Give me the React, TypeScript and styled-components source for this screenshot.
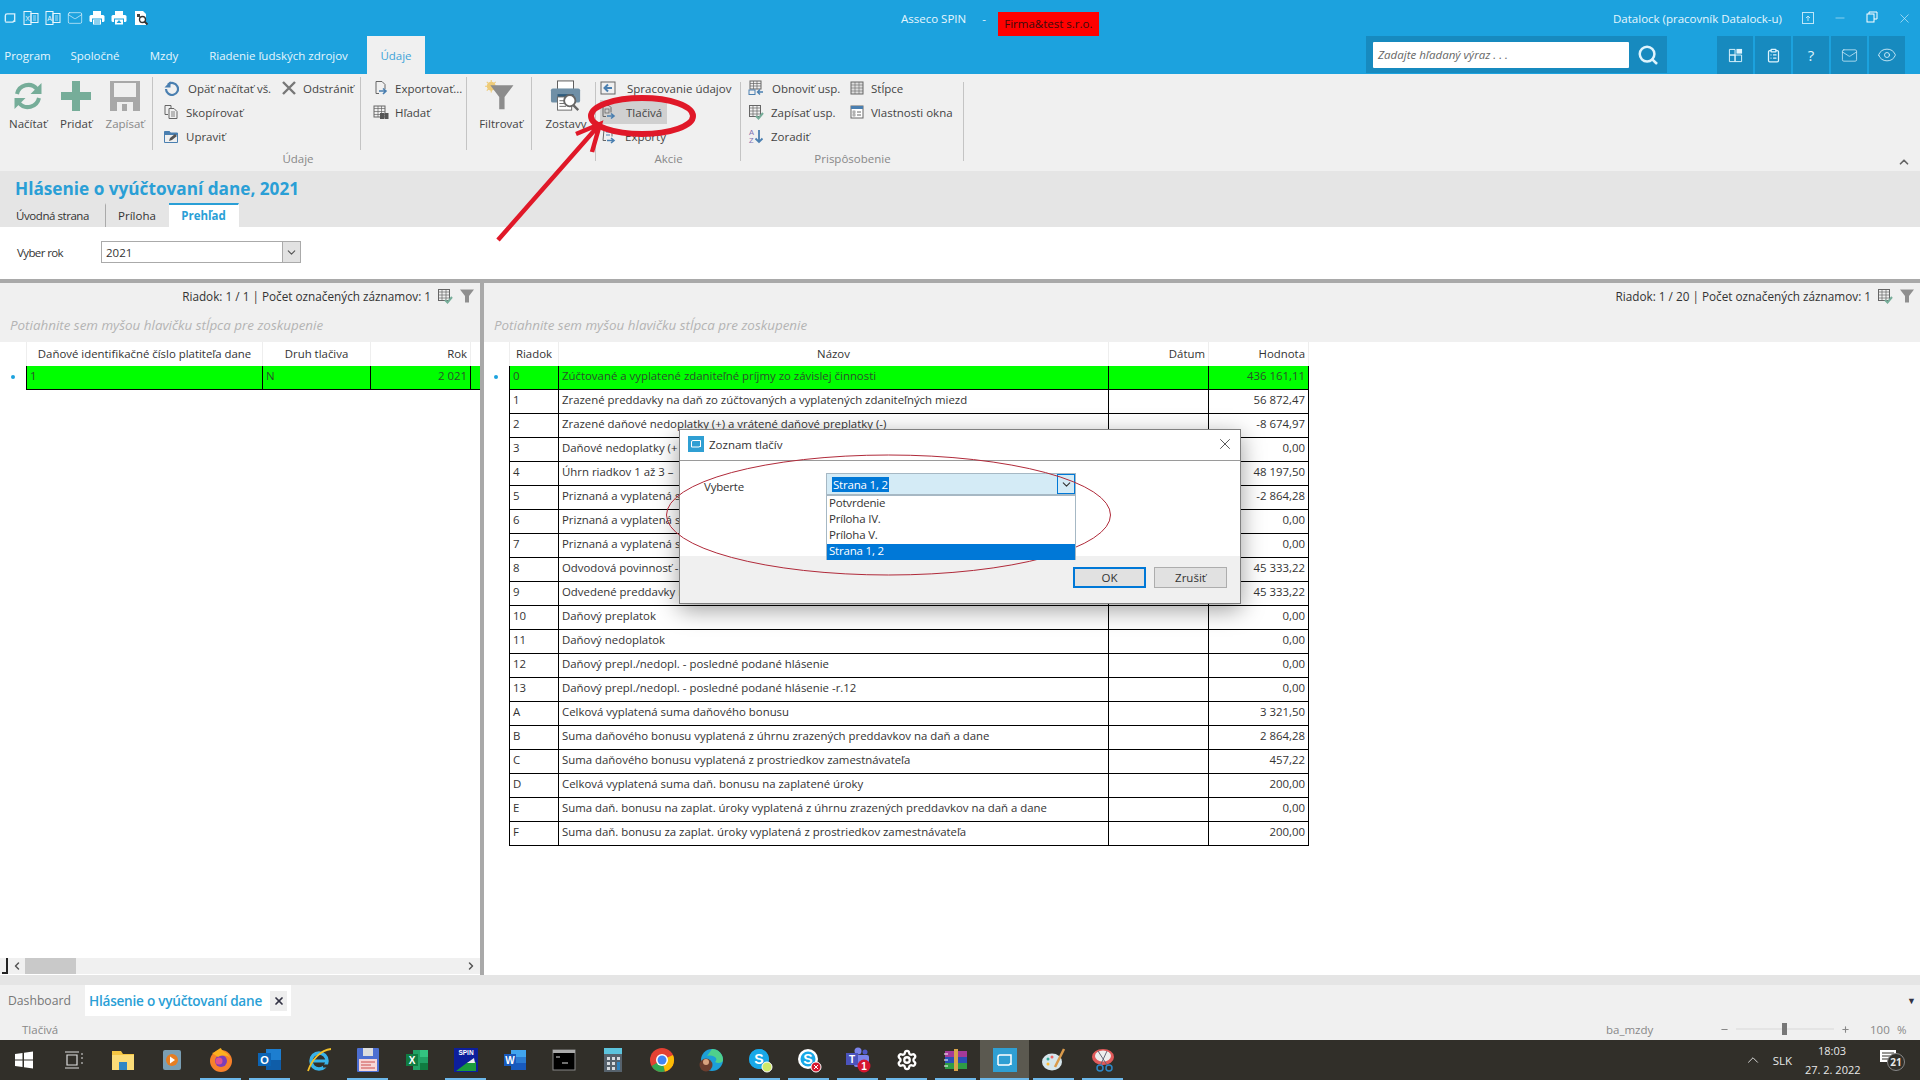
import React from "react";
import styled, { createGlobalStyle } from "styled-components";
import { Search, Mail, Eye, ClipboardList, Settings, ChevronUp, ChevronDown, ChevronLeft, ChevronRight, X, Minus, Plus } from "lucide-react";

const Global = createGlobalStyle`
  html, body { margin: 0; padding: 0; background: #fff; }
  body { font-family: "Open Sans", "Liberation Sans", sans-serif; font-size: 11.5px; color: #333; }
  * { box-sizing: border-box; }
`;

const Page = styled.div`
  position: relative; width: 1920px; height: 1080px; overflow: hidden;
  display: flex; flex-direction: column; background: #fff;
`;

/* ---------- Title bar ---------- */
const Blue = styled.header`background: #1ca2de; height: 74px; display: flex; flex-direction: column; color: #e6f6fd;`;
const TitleRow = styled.div`height: 36px; display: flex; align-items: center;`;
const QuickIcons = styled.div`width: 901px; display: flex; align-items: center; gap: 6px; padding-left: 3px;`;
const TitleText = styled.span`font-size: 11.5px;`;
const Dash = styled.span`margin: 0 12px 0 16px;`;
const Firm = styled.span`align-self: flex-end; background: #f00; color: #3a0d0d; width: 101px; height: 24px; line-height: 24px; text-align: center; font-size: 11.5px; white-space: nowrap;`;
const User = styled.span`margin-left: auto; margin-right: 10px; font-size: 11.5px;`;
const WinBtn = styled.span`width: 32px; display: flex; justify-content: center; color: #d8f0fb;`;
const WinBtns = styled.div`display: flex; width: 128px;`;
const MenuRow = styled.div`height: 38px; display: flex; align-items: stretch;`;
const Menu = styled.span<{ $w: number; $pr?: number; $active?: boolean }>`
  width: ${p => p.$w}px; padding-right: ${p => p.$pr ?? 0}px; display: flex; align-items: center; justify-content: center; font-size: 11.5px; white-space: nowrap;
  color: ${p => (p.$active ? "#3ea4d9" : "#e6f6fd")};
  background: ${p => (p.$active ? "#f0f0f0" : "transparent")};
`;
const SearchBlock = styled.div`margin-left: auto; width: 301px; height: 37px; background: #178abf; display: flex; align-items: center; padding-left: 7px;`;
const SearchInput = styled.div`width: 256px; height: 26px; background: #fff; border-radius: 1px; color: #666; font-style: italic; font-size: 11.5px; line-height: 26px; padding-left: 5px;`;
const SearchIcon = styled.span`display: flex; margin-left: 8px; color: #dff4fd;`;
const QuickBtns = styled.div`display: flex; gap: 2px; margin: 0 15px 0 50px;`;
const QuickBtn = styled.span`width: 36px; height: 38px; background: #178abf; display: flex; align-items: center; justify-content: center; color: #dff4fd; font-size: 15px;`;

/* ---------- Ribbon ---------- */
const Ribbon = styled.section`height: 97px; background: #f0f0f0; display: flex; align-items: flex-start; padding-top: 3px;`;
const Group = styled.div<{ $w: number }>`width: ${p => p.$w}px; display: flex; flex-direction: column; position: relative;`;
const GroupEdge = styled.span`position: absolute; right: 0; top: 5px; height: 79px; width: 1px; background: #c4c4c4;`;
const GroupBody = styled.div`height: 73px; display: flex;`;
const GroupLabel = styled.div`height: 20px; line-height: 18px; text-align: center; color: #888; font-size: 11.5px;`;
const Big = styled.div<{ $w: number; $dim?: boolean; $pl?: number }>`
  width: ${p => p.$w}px; padding-left: ${p => p.$pl ?? 0}px; display: flex; flex-direction: column; align-items: center; padding-top: 3px;
  color: ${p => (p.$dim ? "#888" : "#444")}; font-size: 11.5px; white-space: nowrap;
  svg { height: 32px; margin-bottom: 4px; }
`;
const Sep = styled.span`width: 1px; background: #c4c4c4; flex: none;`;
const Col = styled.div<{ $w: number; $pl?: number }>`width: ${p => p.$w}px; padding-left: ${p => p.$pl ?? 0}px; margin-top: -1px; display: flex; flex-direction: column; flex: none;`;
const Small = styled.div<{ $hover?: boolean; $gap?: number }>`
  height: 24px; display: flex; align-items: center; gap: ${p => p.$gap ?? 6}px; color: #444; font-size: 11.5px; white-space: nowrap;
  background: ${p => (p.$hover ? "#d0d0d0" : "transparent")};
  svg { flex: none; }
`;
const Collapse = styled.span`align-self: flex-end; margin: 0 9px 2px auto; color: #666; display: flex;`;

/* ---------- Doc header ---------- */
const DocHead = styled.section`height: 56px; background: #e5e5e5; display: flex; flex-direction: column;`;
const DocTitle = styled.h1`margin: 0; height: 32px; padding-left: 15px; line-height: 36px; font-size: 17.2px; font-weight: 700; color: #2a9fd6;`;
const SubTabs = styled.nav`height: 24px; display: flex;`;
const SubTab = styled.span<{ $w: number; $active?: boolean; $div?: boolean; $tight?: boolean }>`
  width: ${p => p.$w}px; display: flex; align-items: center; justify-content: center; font-size: 11.5px; padding-bottom: 2px;
  letter-spacing: ${p => (p.$tight ? "-0.45px" : "0")};
  background: ${p => (p.$active ? "#fff" : "transparent")};
  color: ${p => (p.$active ? "#2a9fd6" : "#333")};
  font-weight: ${p => (p.$active ? 700 : 400)};
  border-top: 2px solid ${p => (p.$active ? "#2a9fd6" : "transparent")};
  border-right: 1px solid ${p => (p.$div ? "#aaa" : "transparent")};
`;
const YearRow = styled.section`height: 52px; display: flex; align-items: center; padding: 0 0 2px 17px;`;
const YearLabel = styled.span`width: 84px; font-size: 11.5px; letter-spacing: -0.6px;`;
const Select = styled.div`width: 200px; height: 22px; border: 1px solid #aaa; background: #fff; display: flex; align-items: center; padding-left: 4px; justify-content: space-between; font-size: 11.5px;`;
const SelectBtn = styled.span`width: 18px; height: 20px; background: #e2e2e2; border-left: 1px solid #aaa; display: flex; align-items: center; justify-content: center; color: #555;`;
const HSplit = styled.div`height: 4px; background: #a9a9a9;`;

/* ---------- Panels ---------- */
const Panels = styled.main`height: 692px; display: flex;`;
const Panel = styled.div<{ $w?: number }>`
  ${p => (p.$w ? `width: ${p.$w}px;` : "flex: 1;")}
  display: flex; flex-direction: column; position: relative; overflow: hidden;
`;
const VSplit = styled.div`width: 4px; background: #a9a9a9; flex: none;`;
const Info = styled.div`height: 26px; background: #f0f0f0; display: flex; align-items: center; justify-content: flex-end; gap: 6px; padding-right: 5px; font-size: 11.75px; color: #333; svg { flex: none; }`;
const Hint = styled.div`height: 33px; background: #f0f0f0; color: #b4b4b4; font-style: italic; font-size: 13.4px; line-height: 32px; padding-left: 10px;`;
const Grid = styled.div<{ $left: number }>`flex: 1; padding-left: ${p => p.$left}px; position: relative;`;
const Row = styled.div<{ $cols: string; $head?: boolean; $on?: boolean }>`
  display: grid; grid-template-columns: ${p => p.$cols}; height: 24px; width: max-content;
  background: ${p => (p.$on ? "#00ff00" : "#fff")};
  ${p => (p.$head ? "" : "border-bottom: 1px solid #000;")}
`;
const Cell = styled.div<{ $align?: string; $head?: boolean; $on?: boolean }>`
  padding: 0 3px; line-height: ${p => (p.$head ? 24 : 20)}px; font-size: 11.4px; white-space: nowrap; overflow: hidden;
  text-align: ${p => p.$align ?? "left"};
  color: ${p => (p.$on ? "#2b4f2b" : "#333")};
  border-left: 1px solid ${p => (p.$head ? "#eee" : "#000")};
  &:last-child { border-right: 1px solid ${p => (p.$head ? "#eee" : "#000")}; }
`;
const Dot = styled.span<{ $x: number }>`position: absolute; left: ${p => p.$x}px; top: 33px; width: 4px; height: 4px; border-radius: 50%; background: #1ca2de;`;
const Scroll = styled.div`height: 16px; margin-bottom: 1px; background: #f0f0f0; display: flex; align-items: center; color: #555; position: relative;`;
const ScrollCorner = styled.span`position: absolute; left: 2px; top: 0; bottom: 0; width: 6px; border-right: 2px solid #222; border-bottom: 2px solid #222;`;
const Thumb = styled.span`width: 51px; height: 16px; background: #c9c9c9; margin: 0 auto 0 2px;`;
const ScrollArrow = styled.span`display: flex; margin-left: 11px;`;
const ScrollEnd = styled.span`display: flex; margin-right: 3px;`;

/* ---------- Bottom ---------- */
const Gap = styled.div`height: 10px; background: #e5e5e5;`;
const DocTabs = styled.div`height: 31px; background: #f0f0f0; display: flex; align-items: stretch; font-size: 12.2px;`;
const DocTab = styled.span`width: 85px; padding-left: 8px; display: flex; align-items: center; color: #777;`;
const DocTabOn = styled.span`width: 206px; background: #fff; color: #2a9fd6; font-weight: 600; display: flex; align-items: center; justify-content: space-between; padding: 0 4px; font-size: 13.6px; white-space: nowrap; letter-spacing: -0.25px;`;
const TabClose = styled.span`width: 17px; height: 20px; background: #eee; color: #334; display: flex; align-items: center; justify-content: center;`;
const TabsMenu = styled.span`margin-left: auto; margin-right: 4px; display: flex; align-items: center; color: #334; font-size: 9px;`;
const StatusLine = styled.div`height: 24px; padding-top: 2px; background: #f0f0f0; display: flex; align-items: center; color: #888; font-size: 11.5px;`;
const StatusLeft = styled.span`padding-left: 22px; width: 1606px;`;
const StatusDb = styled.span`width: 114px;`;
const Zoom = styled.div`display: flex; align-items: center; color: #888;`;
const Track = styled.span`width: 98px; height: 2px; margin: 0 7px; background: #e4e4e4; position: relative;`;
const TrackThumb = styled.span`position: absolute; left: 46px; top: -5px; width: 5px; height: 12px; background: #777;`;
const ZoomVal = styled.span`margin-left: 20px; width: 27px;`;

/* ---------- Taskbar ---------- */
const Taskbar = styled.footer`height: 40px; background: #312f29; display: flex; align-items: center; color: #e8e8e8; font-size: 11.5px;`;
const TaskBtn = styled.span<{ $w?: number; $run?: boolean; $on?: boolean }>`
  width: ${p => p.$w ?? 49}px; height: 40px; position: relative; display: flex; align-items: center; justify-content: center; flex: none;
  background: ${p => (p.$on ? "#5b5950" : "transparent")};
  ${p => (p.$run ? `&::after { content: ""; position: absolute; left: ${p.$on ? 0 : 4}px; right: ${p.$on ? 0 : 4}px; bottom: 0; height: 2px; background: #6cb8ea; }` : "")}
`;
const Tray = styled.div`margin-left: auto; display: flex; align-items: center; height: 40px;`;
const Lang = styled.span`margin: 0 13px 0 11px;`;
const Clock = styled.div`width: 54px; text-align: center; line-height: 19px; white-space: nowrap; font-size: 11px;`;
const Notif = styled.span`position: relative; margin: 0 20px 0 21px; width: 20px; height: 20px; display: flex;`;
const NotifCount = styled.span`position: absolute; left: 7px; top: 3px; width: 18px; height: 18px; border: 1px solid #888; border-radius: 50%; background: #312f29; font-size: 10px; font-weight: 700; line-height: 16px; text-align: center;`;

/* ---------- Dialog ---------- */
const Dialog = styled.div`
  position: absolute; left: 679px; top: 429px; width: 562px; height: 175px; background: #fff; border: 1px solid #808080;
  box-shadow: 0 6px 22px rgba(0,0,0,.38); display: flex; flex-direction: column;
`;
const DlgHead = styled.div`height: 31px; border-bottom: 1px solid #9a9a9a; display: flex; align-items: center; padding: 0 6px 2px 8px; gap: 5px; font-size: 11.5px;`;
const DlgClose = styled.span`margin-left: auto; display: flex; color: #222;`;
const DlgBody = styled.div`height: 95px; position: relative; display: flex; padding: 18px 0 0 24px; font-size: 11.5px; letter-spacing: -0.2px;`;
const DlgFoot = styled.div`flex: 1; background: #f0f0f0; display: flex; justify-content: flex-end; align-items: flex-start; padding: 11px 13px 0 0; gap: 8px;`;
const DlgBtn = styled.span<{ $primary?: boolean }>`
  width: 73px; height: 21px; background: #e1e1e1; font-size: 11.5px; display: flex; align-items: center; justify-content: center;
  border: ${p => (p.$primary ? "2px solid #0078d7" : "1px solid #adadad")};
`;
const Combo = styled.div`position: absolute; left: 146px; top: 12px; width: 250px; height: 22px; background: #d4ebf6; border: 1px solid #a6b8c4; display: flex; align-items: center; padding-left: 5px;`;
const Selected = styled.span`background: #0078d7; color: #fff; padding: 0 1px; line-height: 15px;`;
const ComboBtn = styled.span`margin-left: auto; width: 18px; height: 20px; border: 1px solid #0078d7; background: #d4ebf6; display: flex; align-items: center; justify-content: center; color: #333;`;
const List = styled.div`position: absolute; left: 146px; top: 34px; width: 250px; height: 65px; background: #fff; border: 1px solid #a6b8c4; z-index: 2;`;
const ListItem = styled.div<{ $on?: boolean }>`
  height: 16px; line-height: 14px; padding-left: 2px; font-size: 11.5px;
  background: ${p => (p.$on ? "#0078d7" : "transparent")}; color: ${p => (p.$on ? "#fff" : "#333")};
`;
const Annot = styled.svg`position: absolute; left: 0; top: 0; width: 1920px; height: 1080px; pointer-events: none;`;

/* ---------- Icons ---------- */
const S = (p: React.SVGProps<SVGSVGElement> & { s?: number; vw?: number }) => {
  const { s = 16, vw = 16, children, ...r } = p;
  return <svg width={s} height={s} viewBox={`0 0 ${vw} ${vw}`} fill="none" {...r}>{children}</svg>;
};
const BL = "#4a7fb0", GR = "#666";
const AppMark = ({ s = 12, c = "#fff" }: { s?: number; c?: string }) => (
  <S s={s} vw={12}><path d="M2 9V4q0-1.500 1.500-1.500H10V9.500M2 9.500H8.500L10 8" stroke={c} strokeWidth="1.200" /></S>
);
const SheetIcon = ({ label, c = "#e8f6fd" }: { label: string; c?: string }) => (
  <S s={16}>
    <rect x="1" y="1.500" width="7" height="13" stroke={c} />
    <rect x="8" y="3.500" width="7" height="9" stroke={c} />
    <path d="M10 6h3M10 8h3M10 10h3" stroke={c} strokeWidth=".7" />
    <text x="4.500" y="10.500" fontSize="7" fill={c} textAnchor="middle" fontFamily="Liberation Sans">{label}</text>
  </S>
);
const PrintFilled = ({ up }: { up?: boolean }) => (
  <S s={16}>
    <rect x="4" y="1" width="8" height="4" fill="#fff" />
    <rect x="0.500" y="5" width="15" height="7" rx="1.500" fill="#fff" />
    <rect x="3.500" y="9" width="9" height="6" fill="#fff" stroke="#1ca2de" />
    {up ? <path d="M8 10 5.500 13h5z" fill="#1ca2de" /> : <path d="M5 11h6M5 13h6" stroke="#1ca2de" />}
  </S>
);
const DocFind = () => (
  <S s={16}>
    <path d="M2 1h8l3 3v11H2z" fill="#fff" />
    <rect x="4" y="4" width="3" height="3" fill="#444" />
    <circle cx="9.500" cy="9.500" r="3" fill="#fff" stroke="#333" strokeWidth="1.300" />
    <path d="m11.500 11.500 3 3" stroke="#333" strokeWidth="1.800" />
  </S>
);
const IRefresh = () => (
  <S s={32} vw={32}>
    <path d="M5 14A11.500 11.500 0 0 1 25 9" stroke="#76ad99" strokeWidth="4" />
    <path d="M27 18A11.500 11.500 0 0 1 7 23" stroke="#76ad99" strokeWidth="4" />
    <path d="M29.500 3v11h-11zM2.500 29V18h11z" fill="#76ad99" />
  </S>
);
const IPlus = () => <S s={32} vw={32}><path d="M12 1h8v11h11v8H20v11h-8V20H1v-8h11z" fill="#76ad99" /></S>;
const ISave = () => (
  <S s={32} vw={32}>
    <path d="M1 1h30v30H1z" fill="#a8a8a8" /><rect x="5" y="3" width="22" height="14" fill="#efefef" />
    <rect x="8" y="22" width="16" height="9" fill="#efefef" /><rect x="13" y="24" width="5" height="7" fill="#a8a8a8" />
  </S>
);
const IFilter = () => (
  <S s={36} vw={36}>
    <circle cx="7" cy="7" r="5" fill="#eecb78" /><path d="M7 0v14M0 7h14M2 2l10 10M12 2 2 12" stroke="#eecb78" strokeWidth="1.200" />
    <path d="M6 6h26L22 19v14h-6V19z" fill="#8c8c8c" />
  </S>
);
const IReport = () => (
  <S s={34} vw={34}>
    <rect x="8" y="1" width="17" height="9" fill="#fff" stroke="#555" />
    <rect x="1" y="9" width="31" height="15" rx="2" fill="#6f8fa6" /><rect x="8" y="15" width="17" height="3" fill="#2f5c7d" />
    <rect x="8" y="18" width="15" height="14" fill="#fff" stroke="#666" />
    <circle cx="21" cy="22" r="6" fill="#fff" stroke="#666" strokeWidth="2" /><path d="m25 27 5 5" stroke="#666" strokeWidth="2.500" />
    <path d="M10 22h5M10 25h5M10 28h7" stroke="#666" />
  </S>
);
const IUndo = () => <S><path d="M5 4.500A6 6 0 1 1 3 9" stroke={BL} strokeWidth="2.200" /><path d="M7.500 1v6.500H1.500z" fill={BL} /></S>;
const IX = () => <S><path d="m2 2 12 12M14 2 2 14" stroke="#777" strokeWidth="2.400" /></S>;
const ICopy = () => <S><path d="M2 1.500h6v3M2 1.500v9h3" stroke={GR} /><path d="M6 4.500h5l3 3v7H6z" stroke={GR} /><path d="M8 8h4M8 10h4M8 12h4" stroke={GR} strokeWidth=".8" /></S>;
const IFolder = () => <S><path d="M1.500 3.500h5l1 1.500h7v9.500h-13z" stroke={BL} /><path d="M1.500 3.500h5l1 1.500h7v2h-13z" fill={BL} /><path d="m6 13 1-3 5-4 2 2-5 4z" fill="#555" /></S>;
const IExport = () => <S><path d="M3 1.500h6l3 3V9M3 1.500v12h3" stroke={GR} /><path d="M6 11h6M10 8.500 13 11l-3 3" stroke={BL} strokeWidth="1.600" /></S>;
const ITableFind = () => <S><rect x="1" y="2" width="11" height="11" stroke={GR} /><path d="M1 4.500h11M1 7.500h11M1 10.500h11M5 2v11M8.500 2v11" stroke={GR} strokeWidth=".7" /><rect x="7" y="9" width="4" height="6" fill="#555" /><rect x="11.500" y="9" width="4" height="6" fill="#555" /></S>;
const IBack = () => <S><rect x="1" y="2" width="14" height="12" stroke={GR} /><path d="M12 8H5M8 4.500 4.500 8 8 11.500" stroke={BL} strokeWidth="2" /></S>;
const IPrintDoc = () => <S><path d="M3 1.500h6l2 2v5M3 1.500v11h3" stroke={GR} /><rect x="5" y="5" width="4" height="4" stroke={GR} strokeWidth=".8" /><path d="M7 12h7M11 9.500 14 12l-3 2.500" stroke={BL} strokeWidth="1.600" /></S>;
const IExports = () => <S><path d="M4 1.500h6l2 2v5M4 1.500l-1 11h3" stroke={GR} /><path d="M6 4h4M6 7h4" stroke={BL} /><path d="M7 12.500h7M11 10l3 2.500L11 15" stroke={BL} strokeWidth="1.600" /></S>;
const IGridIn = () => <S><rect x="2" y="1" width="11" height="8" stroke={GR} /><path d="M2 3.500h11M2 6h11M5.500 1v8M9 1v8" stroke={GR} strokeWidth=".7" /><rect x="1" y="10" width="6" height="4.500" stroke={BL} /><path d="M15 12H9.500M12 9.500 9.500 12 12 14.500" stroke={BL} strokeWidth="1.400" /></S>;
const IGridOk = () => <S><rect x="1.500" y="1.500" width="11" height="11" stroke={GR} /><path d="M1.500 4h11M1.500 7h11M1.500 10h11M5 1.500v11M9 1.500v11" stroke={GR} strokeWidth=".7" /><path d="m8 12 2.500 2.500L15 9" stroke="#76ad99" strokeWidth="2" /></S>;
const ISort = () => <S><text x="1" y="7" fontSize="7.500" fill="#7d6fb0" fontFamily="Liberation Sans">A</text><text x="1" y="15" fontSize="7.500" fill="#7d6fb0" fontFamily="Liberation Sans">Z</text><path d="M11 2v12M7.500 10.500 11 14l3.500-3.500" stroke={BL} strokeWidth="1.800" /></S>;
const IColumns = () => <S><rect x="2" y="2" width="12" height="12" fill="#ddd" stroke={GR} /><path d="M6 2v12M10 2v12M2 5h12M2 8h12M2 11h12" stroke={GR} strokeWidth=".6" /></S>;
const IWin = () => <S><rect x="2" y="2" width="12" height="12" fill="#fff" stroke={GR} /><rect x="2" y="2" width="12" height="3" fill={BL} /><path d="M8 8h4M8 11h4" stroke={GR} /><rect x="4" y="7" width="2" height="2" stroke={GR} strokeWidth=".6" /><rect x="4" y="10" width="2" height="2" stroke={GR} strokeWidth=".6" /></S>;
const IFunnel = () => <S><path d="M1 1.500h14L10 8v6.500H6V8z" fill="#8f8f8f" /></S>;

const Win = () => <S s={20} vw={20}><path d="M1 4 8.500 3v6.500H1zM10 2.800 19 1.500v8h-9zM1 10.500h7.500V17L1 16zM10 10.500h9v8L10 17.200z" fill="#fff" /></S>;
const TaskView = () => <S s={20} vw={20}><path d="M4 5h10v10H4zM2 2h14M2 18h14M18 4h2M18 8h2M18 13h2" stroke="#ddd" strokeWidth="1.200" /></S>;
const Folder = () => <S s={24} vw={24}><path d="M1 3h9l2 3h11v16H1z" fill="#f5c643" /><rect x="1" y="7" width="22" height="15" fill="#fbdc78" /><rect x="8" y="14" width="8" height="8" fill="#2f86c5" /></S>;
const Media = () => <S s={24} vw={24}><rect x="3" y="2" width="18" height="20" rx="2" fill="#7a9fb4" /><circle cx="12" cy="12" r="6" fill="#e67e22" /><path d="m10 8.500 5 3.500-5 3.500z" fill="#fff" /></S>;
const Firefox = () => <S s={26} vw={26}><circle cx="13" cy="14" r="11" fill="#f7812a" /><circle cx="13" cy="14" r="6" fill="#7c3db8" /><path d="M4 6c3 0 4-3 9-5 0 3 7 4 9 10-3-3-8-3-12-1z" fill="#fbb01f" /><circle cx="11" cy="14" r="3.500" fill="#e0518f" /></S>;
const Outlook = () => <S s={26} vw={26}><rect x="9" y="2" width="15" height="21" fill="#1d7ed0" /><path d="M9 13h15v10H9z" fill="#0f5da8" /><rect x="1" y="6" width="13" height="13" fill="#0c64b4" /><text x="7.500" y="16.500" fontSize="11" fontWeight="700" fill="#fff" textAnchor="middle" fontFamily="Liberation Sans">O</text></S>;
const IE = () => (
  <S s={26} vw={26}>
    <circle cx="13" cy="14" r="8" stroke="#38b2e8" strokeWidth="3.500" />
    <path d="M6 14h14" stroke="#38b2e8" strokeWidth="3" />
    <path d="M17 19h7" stroke="#312f29" strokeWidth="3" />
    <path d="M2 24C6 12 15 3 25 2" stroke="#f2c029" strokeWidth="1.800" />
  </S>
);
const Disk = () => <S s={26} vw={26}><rect x="2" y="1" width="22" height="24" rx="1" fill="#4d6fd1" /><rect x="8" y="1" width="10" height="8" fill="#ddd" /><rect x="4" y="12" width="18" height="12" fill="#f7d6d6" /><path d="M6 15h14M6 18h10M6 21h14" stroke="#cc4d4d" /></S>;
const Excel = () => <S s={26} vw={26}><rect x="9" y="3" width="15" height="20" fill="#21a366" /><rect x="16" y="3" width="8" height="7" fill="#33c481" /><rect x="16" y="16" width="8" height="7" fill="#107c41" /><rect x="2" y="7" width="12" height="12" fill="#107c41" /><text x="8" y="16.500" fontSize="10" fontWeight="700" fill="#fff" textAnchor="middle" fontFamily="Liberation Sans">X</text></S>;
const Spin = () => <S s={26} vw={26}><rect x="1" y="1" width="24" height="24" fill="#0d1f9c" /><text x="13" y="8" fontSize="6.500" fontWeight="700" fill="#fff" textAnchor="middle" fontFamily="Liberation Sans">SPIN</text><path d="M3 24 15 15h8v9z" fill="#1b9c3c" /><path d="M14 16 21 11l1 5z" fill="#eee" /></S>;
const Word = () => <S s={26} vw={26}><rect x="9" y="3" width="15" height="20" fill="#2b7cd3" /><rect x="9" y="3" width="15" height="7" fill="#41a5ee" /><rect x="9" y="16" width="15" height="7" fill="#185abd" /><rect x="2" y="7" width="12" height="12" fill="#185abd" /><text x="8" y="16.500" fontSize="10" fontWeight="700" fill="#fff" textAnchor="middle" fontFamily="Liberation Sans">W</text></S>;
const Cmd = () => <S s={26} vw={26}><rect x="2" y="3" width="22" height="20" fill="#000" stroke="#888" /><rect x="2" y="3" width="22" height="3" fill="#aaa" /><path d="M5 10h4M11 16h6" stroke="#ddd" strokeWidth="1.200" /></S>;
const Calc = () => <S s={26} vw={26}><rect x="4" y="1" width="18" height="24" fill="#56626c" /><rect x="4" y="1" width="18" height="6" fill="#5cc4dd" /><path d="M7 10h3v3H7zM12 10h3v3h-3zM17 10h3v3h-3zM7 15h3v3H7zM12 15h3v3h-3zM7 20h3v3H7zM12 20h3v3h-3z" fill="#d7dce0" /><rect x="17" y="15" width="3" height="8" fill="#2f83bf" /></S>;
const Chrome = () => <S s={26} vw={26}><circle cx="13" cy="13" r="12" fill="#e34133" /><path d="M13 13 2.600 19A12 12 0 0 0 13 25c1 0 2-.1 3-.4z" fill="#34a853" /><path d="M13 13 24 8a12 12 0 0 1-8 16.600z" fill="#fbbc05" /><circle cx="13" cy="13" r="6" fill="#fff" /><circle cx="13" cy="13" r="4.500" fill="#4285f4" /></S>;
const Edge = () => <S s={26} vw={26}><circle cx="14" cy="13" r="11" fill="#1d9fd8" /><path d="M14 2a11 11 0 0 1 11 11c0 3-5 4-8 2 4-3-1-8-8-6z" fill="#4fd08c" /><circle cx="8" cy="18" r="6.500" fill="#6b3d2e" /><circle cx="8" cy="15" r="3" fill="#d9a37f" /></S>;
const Skype = ({ red }: { red?: boolean }) => (
  <S s={26} vw={26} style={{ overflow: "visible" }}>
    <circle cx="12" cy="12" r="10" fill={red ? "#fff" : "#18a8e8"} />
    <circle cx="12" cy="12" r={red ? 7.500 : 10} fill="#18a8e8" />
    <text x="12" y="17" fontSize="14" fontWeight="700" fill="#fff" textAnchor="middle" fontFamily="Liberation Sans">S</text>
    <circle cx="20" cy="20" r="5" fill={red ? "#d5162f" : "#cfe96a"} stroke="#fff" />
    {red && <path d="m18 18 4 4m0-4-4 4" stroke="#fff" />}
  </S>
);
const Teams = () => <S s={28} vw={28} style={{ overflow: "visible" }}><circle cx="14" cy="5" r="3.500" fill="#7b83eb" /><circle cx="21" cy="6" r="2.500" fill="#5059c9" /><rect x="10" y="9" width="15" height="12" rx="2" fill="#7b83eb" /><rect x="2" y="7" width="12" height="12" fill="#4b53bc" /><text x="8" y="16.500" fontSize="10" fontWeight="700" fill="#fff" textAnchor="middle" fontFamily="Liberation Sans">T</text><circle cx="20" cy="20" r="6.500" fill="#d5162f" /><text x="20" y="24" fontSize="10" fontWeight="700" fill="#fff" textAnchor="middle" fontFamily="Liberation Sans">1</text></S>;
const Rar = () => <S s={26} vw={26}><rect x="2" y="4" width="22" height="6" fill="#a43a9b" /><rect x="2" y="10" width="22" height="6" fill="#2b4fb8" /><rect x="2" y="16" width="22" height="6" fill="#2f9c45" /><rect x="11" y="2" width="4" height="22" fill="#d9a54a" /><path d="M1 7h4M1 13h4M1 19h4" stroke="#fff" /></S>;
const Paint = () => <S s={26} vw={26}><ellipse cx="11" cy="15" rx="10" ry="8.500" fill="#d6e6ec" /><circle cx="7" cy="12" r="1.500" fill="#3a9" /><circle cx="11" cy="10" r="1.500" fill="#e66" /><circle cx="7" cy="17" r="1.500" fill="#fb3" /><path d="M14 20 23 2" stroke="#d99a4b" strokeWidth="2.500" /></S>;
const Snip = () => <S s={26} vw={26}><ellipse cx="13" cy="10" rx="11" ry="8" fill="#e05a5a" /><ellipse cx="13" cy="9" rx="8" ry="5.500" fill="#eee" /><path d="m8 4 9 14M17 4 11 17" stroke="#667" /><circle cx="19" cy="21" r="3" stroke="#2d86c5" strokeWidth="1.500" /><circle cx="10" cy="21" r="3" stroke="#2d86c5" strokeWidth="1.500" /></S>;

const leftCols = "236px 108px 100px 30px";
const rightCols = "49px 550px 100px 101px";
const rows: [string, string, string][] = [
  ["0", "Zúčtované a vyplatené zdaniteľné príjmy zo závislej činnosti", "436 161,11"],
  ["1", "Zrazené preddavky na daň zo zúčtovaných a vyplatených zdaniteľných miezd", "56 872,47"],
  ["2", "Zrazené daňové nedoplatky (+) a vrátené daňové preplatky (-)", "-8 674,97"],
  ["3", "Daňové nedoplatky (+", "0,00"],
  ["4", "Úhrn riadkov 1 až 3 –", "48 197,50"],
  ["5", "Priznaná a vyplatená s", "-2 864,28"],
  ["6", "Priznaná a vyplatená s", "0,00"],
  ["7", "Priznaná a vyplatená s", "0,00"],
  ["8", "Odvodová povinnosť -", "45 333,22"],
  ["9", "Odvedené preddavky n", "45 333,22"],
  ["10", "Daňový preplatok", "0,00"],
  ["11", "Daňový nedoplatok", "0,00"],
  ["12", "Daňový prepl./nedopl. - posledné podané hlásenie", "0,00"],
  ["13", "Daňový prepl./nedopl. - posledné podané hlásenie -r.12", "0,00"],
  ["A", "Celková vyplatená suma daňového bonusu", "3 321,50"],
  ["B", "Suma daňového bonusu vyplatená z úhrnu zrazených preddavkov na daň a dane", "2 864,28"],
  ["C", "Suma daňového bonusu vyplatená z prostriedkov zamestnávateľa", "457,22"],
  ["D", "Celková vyplatená suma daň. bonusu na zaplatené úroky", "200,00"],
  ["E", "Suma daň. bonusu na zaplat. úroky vyplatená z úhrnu zrazených preddavkov na daň a dane", "0,00"],
  ["F", "Suma daň. bonusu za zaplat. úroky vyplatená z prostriedkov zamestnávateľa", "200,00"],
];

export default function App() {
  return (
    <Page>
      <Global />
      <Blue>
        <TitleRow>
          <QuickIcons>
            <AppMark s={14} c="#d8f0fb" />
            <SheetIcon label="X" /><SheetIcon label="A" />
            <Mail size={16} strokeWidth={1} />
            <PrintFilled /><PrintFilled up />
            <DocFind />
          </QuickIcons>
          <TitleText>Asseco SPIN</TitleText>
          <Dash>-</Dash>
          <Firm>Firma&amp;test s.r.o.</Firm>
          <User>Datalock (pracovník Datalock-u)</User>
          <WinBtns>
            <WinBtn><S s={14} vw={14}><rect x="1.500" y="1.500" width="11" height="11" stroke="#bde6f8" /><path d="M7 10V5M5 7l2-2 2 2" stroke="#bde6f8" /></S></WinBtn>
            <WinBtn><Minus size={14} strokeWidth={1} /></WinBtn>
            <WinBtn><S s={12} vw={12}><rect x="1" y="3" width="7" height="8" stroke="#fff" /><path d="M3 3V1h8v7H8" stroke="#fff" /></S></WinBtn>
            <WinBtn><X size={15} strokeWidth={1} /></WinBtn>
          </WinBtns>
        </TitleRow>
        <MenuRow>
          <Menu $w={55}>Program</Menu>
          <Menu $w={80}>Spoločné</Menu>
          <Menu $w={58}>Mzdy</Menu>
          <Menu $w={174} $pr={3}>Riadenie ľudských zdrojov</Menu>
          <Menu $w={58} $active>Údaje</Menu>
          <SearchBlock>
            <SearchInput>Zadajte hľadaný výraz . . .</SearchInput>
            <SearchIcon><Search size={22} strokeWidth={2.7} /></SearchIcon>
          </SearchBlock>
          <QuickBtns>
            <QuickBtn><S s={15}><path d="M1.500 1.500h6v6h-6zM1.500 7.500h6v7h-6zM7.500 7.500h7v7h-7z" stroke="#dff4fd" /><rect x="9" y="1" width="6" height="5" fill="#dff4fd" /></S></QuickBtn>
            <QuickBtn><ClipboardList size={15} /></QuickBtn>
            <QuickBtn>?</QuickBtn>
            <QuickBtn><Mail size={17} strokeWidth={1} /></QuickBtn>
            <QuickBtn><Eye size={20} strokeWidth={1} /></QuickBtn>
          </QuickBtns>
        </MenuRow>
      </Blue>

      <Ribbon>
        <Group $w={596}>
          <GroupEdge />
          <GroupBody>
            <Col $w={4} />
            <Big $w={48}><IRefresh />Načítať</Big>
            <Big $w={48}><IPlus />Pridať</Big>
            <Big $w={50} $dim><ISave />Zapísať</Big>
            <Col $w={2} />
            <Sep />
            <Col $w={128} $pl={10}>
              <Small $gap={9}><IUndo />Opäť načítať vš.</Small>
              <Small $gap={7}><ICopy />Skopírovať</Small>
              <Small $gap={7}><IFolder />Upraviť</Small>
            </Col>
            <Col $w={79}><Small $gap={6}><IX />Odstrániť</Small></Col>
            <Sep />
            <Col $w={105} $pl={12}>
              <Small><IExport />Exportovať...</Small>
              <Small><ITableFind />Hľadať</Small>
            </Col>
            <Sep />
            <Big $w={64} $pl={4}><IFilter />Filtrovať</Big>
            <Sep />
            <Big $w={64} $pl={4}><IReport />Zostavy</Big>
          </GroupBody>
          <GroupLabel>Údaje</GroupLabel>
        </Group>
        <Group $w={145}>
          <GroupEdge />
          <GroupBody>
            <Col $w={145} $pl={4}>
              <Small $gap={11}><IBack />Spracovanie údajov</Small>
              <Small $gap={10} $hover style={{ width: 67 }}><IPrintDoc />Tlačivá</Small>
              <Small $gap={9}><IExports />Exporty</Small>
            </Col>
          </GroupBody>
          <GroupLabel>Akcie</GroupLabel>
        </Group>
        <Group $w={223}>
          <GroupEdge />
          <GroupBody>
            <Col $w={108} $pl={7}>
              <Small $gap={8}><IGridIn />Obnoviť usp.</Small>
              <Small $gap={7}><IGridOk />Zapísať usp.</Small>
              <Small $gap={7}><ISort />Zoradiť</Small>
            </Col>
            <Col $w={112}>
              <Small $gap={6}><IColumns />Stĺpce</Small>
              <Small $gap={6}><IWin />Vlastnosti okna</Small>
            </Col>
          </GroupBody>
          <GroupLabel>Prispôsobenie</GroupLabel>
        </Group>
        <Collapse><ChevronUp size={14} strokeWidth={3} /></Collapse>
      </Ribbon>

      <DocHead>
        <DocTitle>Hlásenie o vyúčtovaní dane, 2021</DocTitle>
        <SubTabs>
          <SubTab $w={106} $div $tight>Úvodná strana</SubTab>
          <SubTab $w={63}>Príloha</SubTab>
          <SubTab $w={70} $active>Prehľad</SubTab>
        </SubTabs>
      </DocHead>

      <YearRow>
        <YearLabel>Vyber rok</YearLabel>
        <Select>2021<SelectBtn><ChevronDown size={13} /></SelectBtn></Select>
      </YearRow>
      <HSplit />

      <Panels>
        <Panel $w={480}>
          <Info>Riadok: 1 / 1 | Počet označených záznamov: 1 <IGridOk /><IFunnel /></Info>
          <Hint>Potiahnite sem myšou hlavičku stĺpca pre zoskupenie</Hint>
          <Grid $left={26}>
            <Row $cols={leftCols} $head>
              <Cell $head $align="center">Daňové identifikačné číslo platiteľa dane</Cell>
              <Cell $head $align="center">Druh tlačiva</Cell>
              <Cell $head $align="right">Rok</Cell>
              <Cell $head />
            </Row>
            <Row $cols={leftCols} $on>
              <Cell $on>1</Cell><Cell $on>N</Cell><Cell $on $align="right">2 021</Cell><Cell $on />
            </Row>
            <Dot $x={11} />
          </Grid>
          <Scroll>
            <ScrollCorner />
            <ScrollArrow><ChevronLeft size={12} strokeWidth={3} /></ScrollArrow>
            <Thumb />
            <ScrollEnd><ChevronRight size={12} strokeWidth={3} /></ScrollEnd>
          </Scroll>
        </Panel>
        <VSplit />
        <Panel>
          <Info>Riadok: 1 / 20 | Počet označených záznamov: 1 <IGridOk /><IFunnel /></Info>
          <Hint>Potiahnite sem myšou hlavičku stĺpca pre zoskupenie</Hint>
          <Grid $left={25}>
            <Row $cols={rightCols} $head>
              <Cell $head $align="center">Riadok</Cell>
              <Cell $head $align="center">Názov</Cell>
              <Cell $head $align="right">Dátum</Cell>
              <Cell $head $align="right">Hodnota</Cell>
            </Row>
            {rows.map((r, i) => (
              <Row key={r[0]} $cols={rightCols} $on={i === 0}>
                <Cell $on={i === 0}>{r[0]}</Cell>
                <Cell $on={i === 0}>{r[1]}</Cell>
                <Cell $on={i === 0} />
                <Cell $on={i === 0} $align="right">{r[2]}</Cell>
              </Row>
            ))}
            <Dot $x={10} />
          </Grid>
        </Panel>
      </Panels>

      <Gap />
      <DocTabs>
        <DocTab>Dashboard</DocTab>
        <DocTabOn>Hlásenie o vyúčtovaní dane <TabClose><X size={12} strokeWidth={3.5} /></TabClose></DocTabOn>
        <TabsMenu>▼</TabsMenu>
      </DocTabs>
      <StatusLine>
        <StatusLeft>Tlačivá</StatusLeft>
        <StatusDb>ba_mzdy</StatusDb>
        <Zoom>
          <Minus size={9} strokeWidth={3} />
          <Track><TrackThumb /></Track>
          <Plus size={9} strokeWidth={3} />
          <ZoomVal>100</ZoomVal>%
        </Zoom>
      </StatusLine>

      <Taskbar>
        <TaskBtn $w={48}><Win /></TaskBtn>
        <TaskBtn $w={50}><TaskView /></TaskBtn>
        <TaskBtn><Folder /></TaskBtn>
        <TaskBtn><Media /></TaskBtn>
        <TaskBtn $run><Firefox /></TaskBtn>
        <TaskBtn $run><Outlook /></TaskBtn>
        <TaskBtn><IE /></TaskBtn>
        <TaskBtn $run><Disk /></TaskBtn>
        <TaskBtn><Excel /></TaskBtn>
        <TaskBtn $run><Spin /></TaskBtn>
        <TaskBtn><Word /></TaskBtn>
        <TaskBtn><Cmd /></TaskBtn>
        <TaskBtn><Calc /></TaskBtn>
        <TaskBtn><Chrome /></TaskBtn>
        <TaskBtn><Edge /></TaskBtn>
        <TaskBtn $run><Skype /></TaskBtn>
        <TaskBtn $run><Skype red /></TaskBtn>
        <TaskBtn $run><Teams /></TaskBtn>
        <TaskBtn $run><Settings size={22} color="#fff" strokeWidth={2.5} /></TaskBtn>
        <TaskBtn $run><Rar /></TaskBtn>
        <TaskBtn $run $on><S s={24} vw={24}><rect width="24" height="24" fill="#2f9fd3" /><path d="M5 17V9q0-2 2-2h11v10M5 17h11l2-2" stroke="#fff" strokeWidth="1.500" /></S></TaskBtn>
        <TaskBtn $run><Paint /></TaskBtn>
        <TaskBtn $run><Snip /></TaskBtn>
        <Tray>
          <ChevronUp size={18} strokeWidth={1.2} />
          <Lang>SLK</Lang>
          <Clock>18:03<br />27. 2. 2022</Clock>
          <Notif>
            <S s={16}><path d="M0 0h16v12H0z" fill="#fff" /><path d="M2 3h12M2 6h12M2 9h8" stroke="#312f29" /></S>
            <NotifCount>21</NotifCount>
          </Notif>
        </Tray>
      </Taskbar>

      <Dialog>
        <DlgHead>
          <S s={16}><rect width="16" height="16" fill="#2f9fd3" /><path d="M3.500 11V6q0-1.500 1.500-1.500h7.500V11M3.500 11H11l1.500-1" stroke="#fff" /></S>
          Zoznam tlačív
          <DlgClose><X size={18} strokeWidth={1} /></DlgClose>
        </DlgHead>
        <DlgBody>
          Vyberte
          <Combo>
            <Selected>Strana 1, 2</Selected>
            <ComboBtn><ChevronDown size={13} /></ComboBtn>
          </Combo>
          <List>
            <ListItem>Potvrdenie</ListItem>
            <ListItem>Príloha IV.</ListItem>
            <ListItem>Príloha V.</ListItem>
            <ListItem $on>Strana 1, 2</ListItem>
          </List>
        </DlgBody>
        <DlgFoot>
          <DlgBtn $primary>OK</DlgBtn>
          <DlgBtn>Zrušiť</DlgBtn>
        </DlgFoot>
      </Dialog>

      <Annot viewBox="0 0 1920 1080">
        <ellipse cx="642" cy="116" rx="51" ry="18" stroke="#e01828" strokeWidth="6" fill="none" />
        <path d="M498 240 600 124M576 134 600 124 592 152" stroke="#e01828" strokeWidth="4.500" fill="none" />
        <ellipse cx="888.500" cy="515" rx="222" ry="60" stroke="#b02a3a" strokeWidth="1" fill="none" />
      </Annot>
    </Page>
  );
}
